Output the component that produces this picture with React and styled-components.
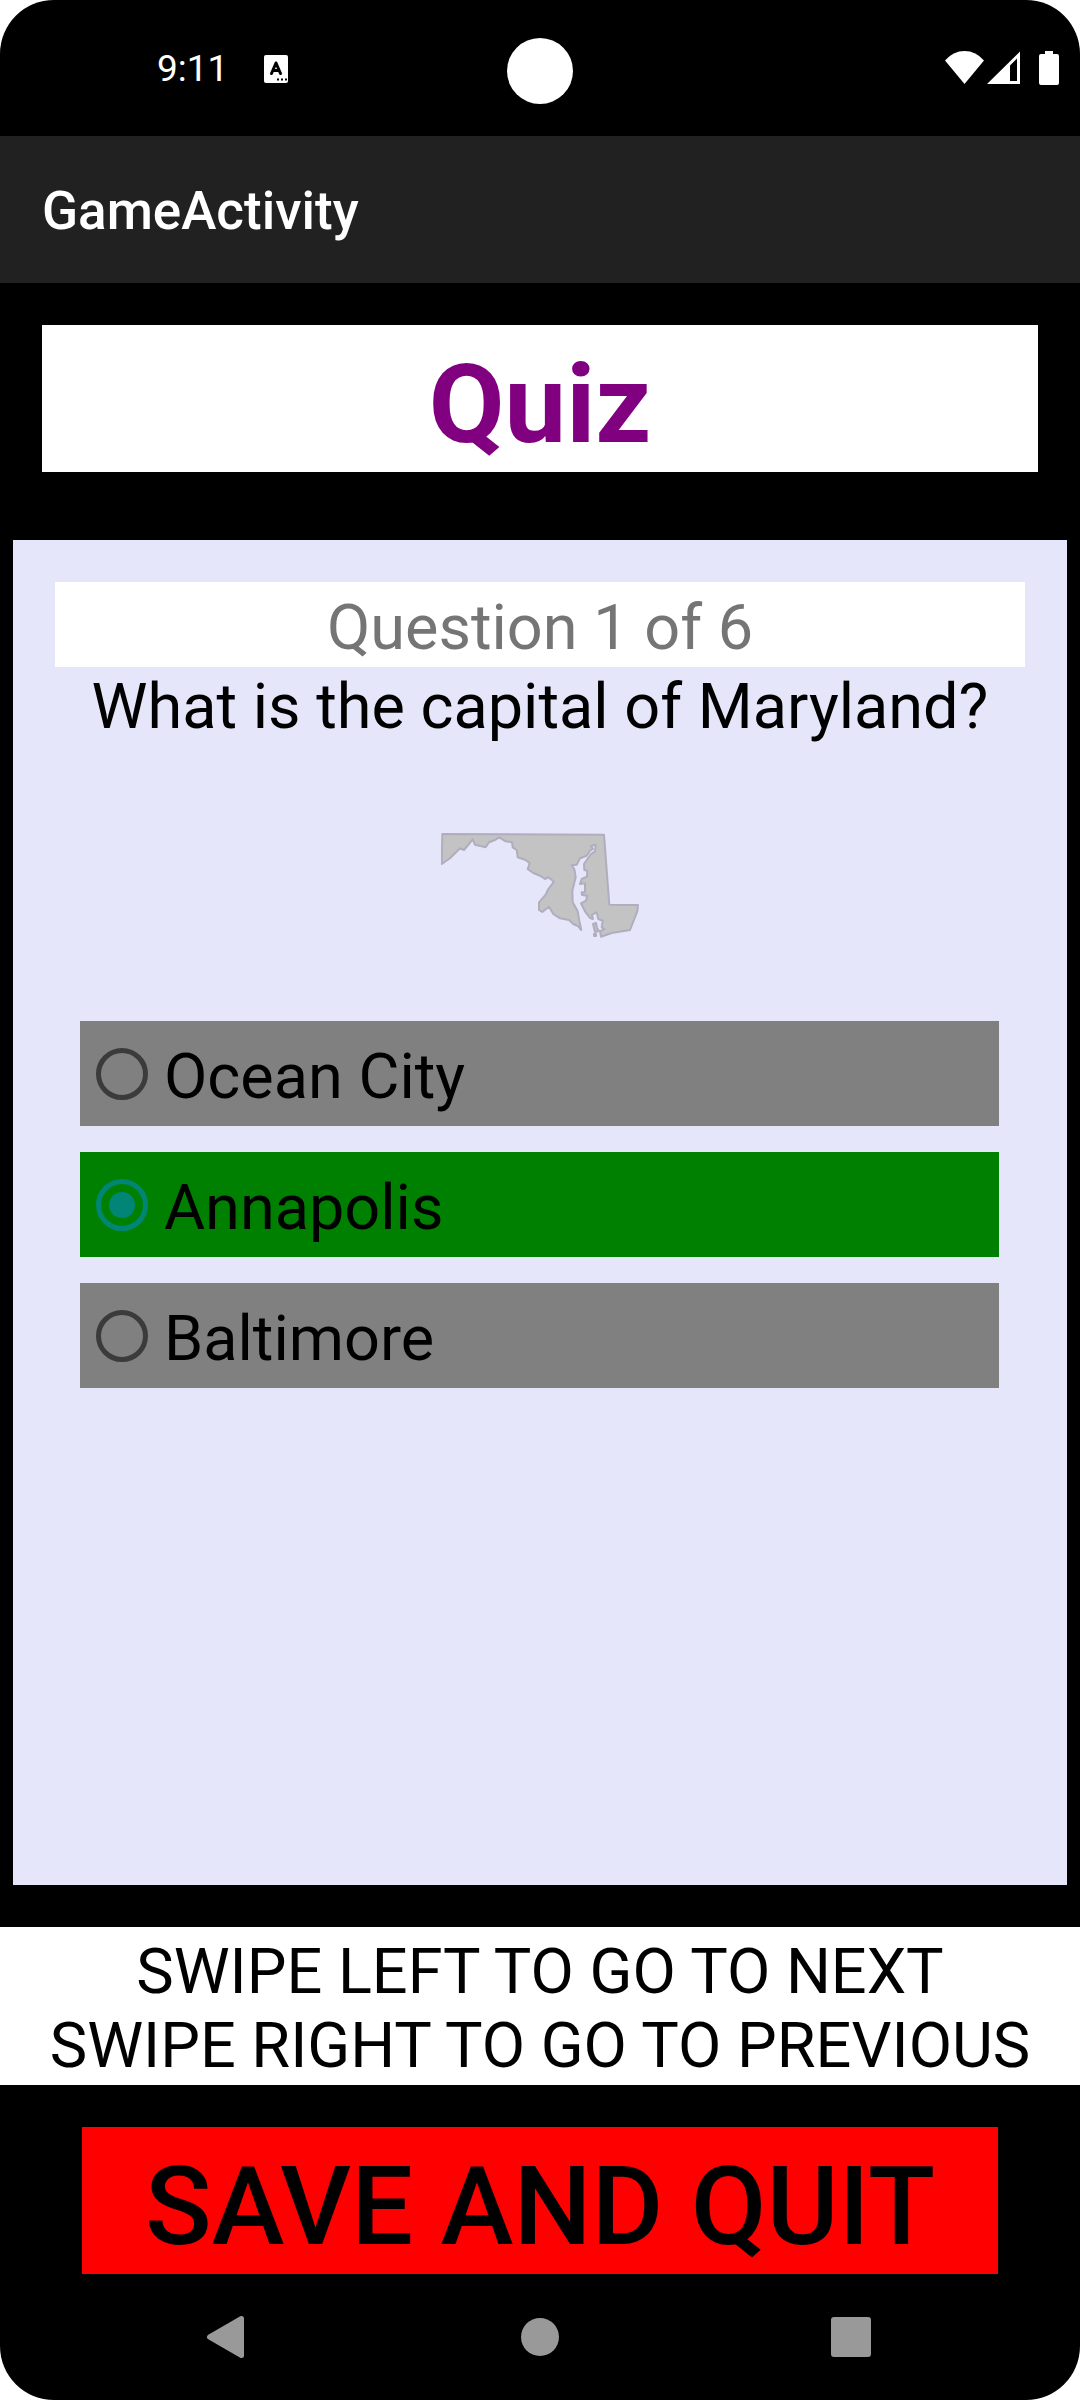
import React, { useState } from "react";
import styled, { createGlobalStyle } from "styled-components";

const GlobalStyle = createGlobalStyle`
  *, *::before, *::after { box-sizing: border-box; }
  body { margin: 0; background: #fff; font-family: Roboto, sans-serif; }
  h1, h2, p, fieldset { margin: 0; padding: 0; border: 0; font-weight: 400; }
`;

const Screen = styled.div`
  display: flex;
  flex-direction: column;
  min-height: 100vh;
  background: #000;
  border-radius: 54px;
  overflow: hidden;
`;

const StatusBar = styled.header`
  display: grid;
  grid-template-columns: 1fr auto 1fr;
  align-items: start;
  height: 136px;
  color: #fff;
`;

const StatusLeft = styled.div`
  display: flex;
  align-items: center;
  gap: 36px;
  padding: 47px 0 0 157px;
`;

const Clock = styled.span`
  font-size: 37px;
  line-height: 44px;
`;

const Camera = styled.div`
  width: 66px;
  height: 66px;
  margin-top: 38px;
  border-radius: 50%;
  background: #fff;
`;

const StatusRight = styled.div`
  display: flex;
  justify-content: flex-end;
  padding: 51px 21px 0 0;
`;

const AppBar = styled.div`
  display: flex;
  align-items: center;
  height: 147px;
  padding: 3px 42px 0;
  background: #212121;
`;

const AppTitle = styled.h1`
  && { font-weight: 500; }
  color: #fff;
  font-size: 53px;
  line-height: 62px;
`;

const QuizTitle = styled.h2`
  && { margin: 42px 42px 0; font-weight: 700; padding: 15px 0 3px; }
  background: #fff;
  color: #800080;
  font-size: 110px;
  line-height: 129px;
  text-align: center;
`;

const QuestionPanel = styled.main`
  flex: 1;
  margin: 68px 13px 0;
  padding: 42px;
  background: #e6e6fa;
`;

const Progress = styled.p`
  && { padding: 9px 0 2px; }
  background: #fff;
  color: #757575;
  font-size: 63px;
  line-height: 74px;
  text-align: center;
`;

const Prompt = styled.p`
  && { padding-top: 3px; }
  color: #000;
  font-size: 63px;
  line-height: 74px;
  text-align: center;
`;

const StateMap = styled.svg`
  display: block;
  width: 198px;
  height: 106px;
  margin: 89px auto 82px;
`;

const Options = styled.fieldset`
  && { margin: 0 26px 0 25px; }
  display: flex;
  flex-direction: column;
  gap: 26px;
  min-width: 0;
`;

const Option = styled.label`
  display: flex;
  align-items: center;
  gap: 16px;
  height: 105px;
  padding: 0 16px;
  background: ${(p) => (p.$selected ? "#008000" : "#808080")};
`;

const Radio = styled.input`
  appearance: none;
  display: grid;
  place-items: center;
  flex: none;
  width: 52px;
  height: 52px;
  margin: 0;
  border: 5px solid rgba(0, 0, 0, 0.54);
  border-radius: 50%;

  &:checked { border-color: #008577; }

  &:checked::before {
    content: "";
    width: 26px;
    height: 26px;
    border-radius: 50%;
    background: #008577;
  }
`;

const OptionText = styled.span`
  padding-top: 6px;
  color: #000;
  font-size: 63px;
  line-height: 74px;
`;

const SwipeHint = styled.p`
  && { margin: 42px 0; padding: 8px 0 2px; }
  background: #fff;
  color: #000;
  font-size: 63px;
  line-height: 74px;
  text-align: center;
`;

const QuitButton = styled.button`
  display: block;
  margin: 0 82px;
  padding: 15px 0 3px;
  border: 0;
  background: #f00;
  color: #000;
  font: 500 110px/129px Roboto, sans-serif;
`;

const NavBar = styled.nav`
  display: flex;
  justify-content: center;
  gap: 247px;
  padding: 31px 0;
`;

const NavButton = styled.button`
  display: block;
  width: 64px;
  height: 64px;
  padding: 0;
  border: 0;
  background: none;
`;

const AlphabetBadge = () => (
  <svg width="24" height="28" viewBox="0 0 24 28" aria-hidden="true">
    <rect width="24" height="28" rx="2" fill="#fff" />
    <path d="M7.500 18.500 L12 8 L16.500 18.500 M9 15.500 H15" fill="none" stroke="#000" strokeWidth="3" strokeLinecap="round" strokeLinejoin="round" />
    <path d="M13 24.500h2M17 24.500h2M21 24.500h2" stroke="#000" strokeWidth="2" />
  </svg>
);

const SystemIcons = () => (
  <svg width="114" height="35" viewBox="0 0 114 35" fill="#fff" aria-hidden="true">
    <path d="M0 9.500Q8 0 19.500 0T39 9.500L19.500 33Z" />
    <path fillRule="evenodd" d="M42 33L75 0.500V33ZM65 14.500V30H72V7.500Z" />
    <path d="M100 0h8v3h4q2 0 2 2v27q0 2-2 2h-16q-2 0-2-2V5q0-2 2-2h4z" />
  </svg>
);

const Maryland = () => (
  <StateMap viewBox="0 0 198 106" role="img" aria-label="Outline of Maryland">
    <g fill="#c3c3c3" stroke="#b0aebe" strokeWidth="2" strokeLinejoin="round">
      <path d="M1.300 1L163 1.700L168.300 71.700L197 72L196.300 78.300L189 97L170.700 100L160 103.700L159 98.300L163.300 96L160.700 94.300L161.700 87.700L157.300 86L155.700 79.300L151 81.700L152 86L149 85L144 78.300L140 70.300L145 67.700L146.300 62.700L141 62L140.700 59.300L144 59.300V50.300L139 51L140.700 46L146 43.700L146.300 37.700L143.300 37L143 31L145.700 27L150 21L154 18.300L154.700 11.700L150 13L152 16L149 17.700L145.700 22.700L139 25.300L135.700 31.700L130.700 32.300L133.300 36L134.700 44.300L131.300 57.700L131.700 69.300L136.700 78.300L138.300 87.700L140.300 97L137.300 93.300L132.300 91L128 87L119 85.300L112.300 81L108 73.700L101.300 79L98 77V69.300L104.700 61.700L107.300 56L113 48.700L107.300 44.300L104 46L99 42.700L92.300 40L86.700 36L88.700 30.300L84.700 27L76.700 24.300L75.700 17L71.700 14.300L71 9.300L64.700 8.300L58.300 4.300L54 7L48 9.300L44.700 14.300L34 11.700L31.700 6.300L23 17L19 15.300L9 25.300L0.700 31Z" />
      <path d="M152 91L155 90L156 95L158 98L154 99Z" />
      <path d="M153 101h2v2h-2z" />
    </g>
  </StateMap>
);

const ANSWERS = ["Ocean City", "Annapolis", "Baltimore"];

export default function App() {
  const [answer, setAnswer] = useState("Annapolis");

  return (
    <>
      <GlobalStyle />
      <Screen>
        <StatusBar>
          <StatusLeft>
            <Clock>9:11</Clock>
            <AlphabetBadge />
          </StatusLeft>
          <Camera />
          <StatusRight>
            <SystemIcons />
          </StatusRight>
        </StatusBar>
        <AppBar>
          <AppTitle>GameActivity</AppTitle>
        </AppBar>
        <QuizTitle>Quiz</QuizTitle>
        <QuestionPanel>
          <Progress>Question 1 of 6</Progress>
          <Prompt id="prompt">What is the capital of Maryland?</Prompt>
          <Maryland />
          <Options aria-labelledby="prompt">
            {ANSWERS.map((name) => (
              <Option key={name} $selected={name === answer}>
                <Radio
                  type="radio"
                  name="capital"
                  value={name}
                  checked={name === answer}
                  onChange={() => setAnswer(name)}
                />
                <OptionText>{name}</OptionText>
              </Option>
            ))}
          </Options>
        </QuestionPanel>
        <SwipeHint>
          SWIPE LEFT TO GO TO NEXT
          <br />
          SWIPE RIGHT TO GO TO PREVIOUS
        </SwipeHint>
        <QuitButton type="button">SAVE AND QUIT</QuitButton>
        <NavBar>
          <NavButton type="button" aria-label="Back">
            <svg width="64" height="64" viewBox="0 0 64 64" aria-hidden="true">
              <path d="M12.500 32L44.500 13.500V50.500Z" fill="#999" stroke="#999" strokeWidth="5" strokeLinejoin="round" />
            </svg>
          </NavButton>
          <NavButton type="button" aria-label="Home">
            <svg width="64" height="64" viewBox="0 0 64 64" aria-hidden="true">
              <circle cx="32" cy="32" r="19" fill="#999" />
            </svg>
          </NavButton>
          <NavButton type="button" aria-label="Recent apps">
            <svg width="64" height="64" viewBox="0 0 64 64" aria-hidden="true">
              <rect x="12" y="12" width="40" height="40" rx="3" fill="#999" />
            </svg>
          </NavButton>
        </NavBar>
      </Screen>
    </>
  );
}
